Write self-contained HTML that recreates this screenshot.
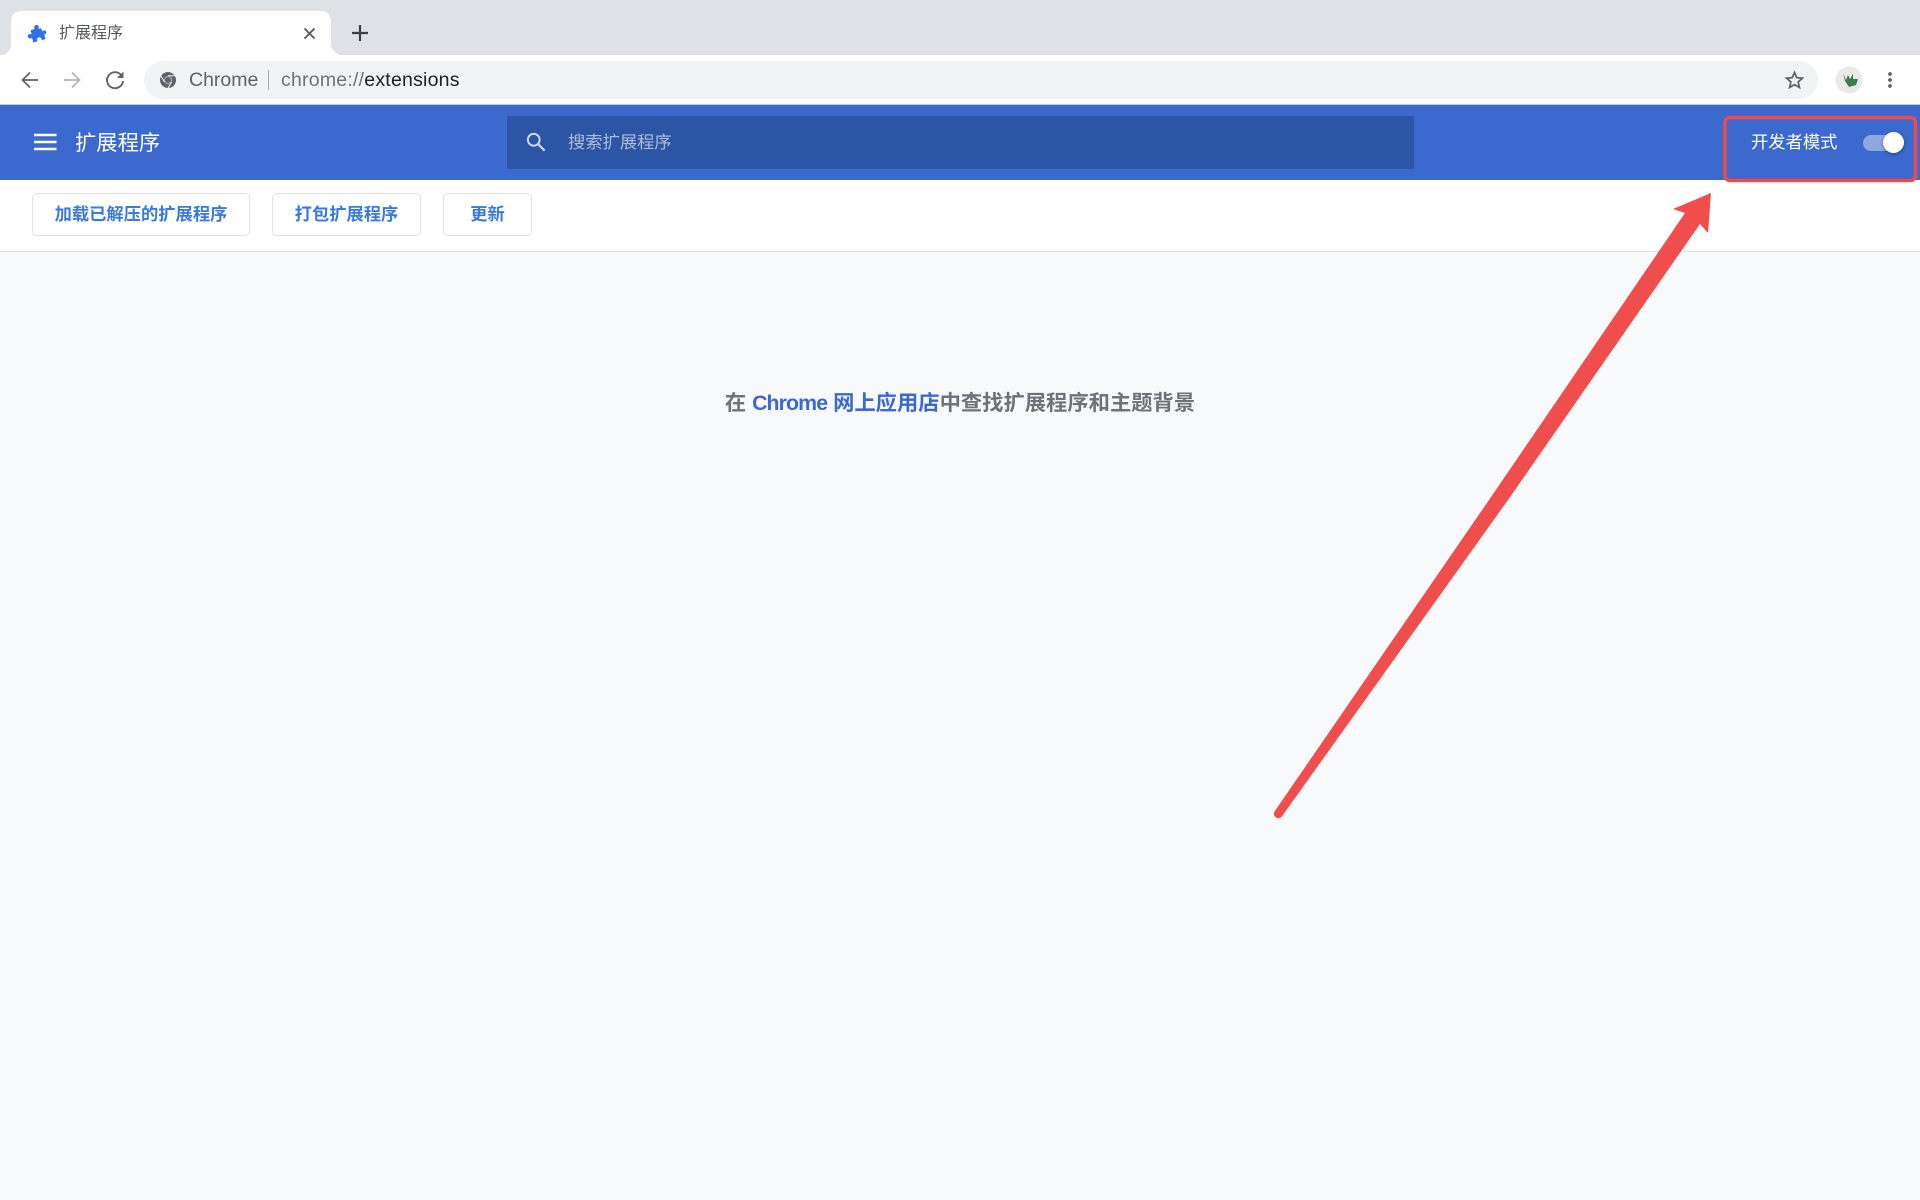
<!DOCTYPE html>
<html lang="zh">
<head>
<meta charset="utf-8">
<title>扩展程序</title>
<style>
html,body{margin:0;padding:0}
body{width:1920px;height:1200px;position:relative;overflow:hidden;background:#f8f9fb;font-family:"Liberation Sans","Noto Sans CJK SC",sans-serif}
.a{position:absolute;white-space:nowrap}
svg{position:absolute;display:block}
.btn{position:absolute;top:193px;height:41px;border:1.5px solid #dfe1e5;border-radius:5px;background:#fff;color:#3a7ae0;font-size:17.300px;font-weight:700;line-height:41px;text-align:center;white-space:nowrap}
</style>
</head>
<body>
<div class="a" style="left:0;top:0;width:1920px;height:55px;background:#dee1e6"></div>
<div class="a" style="left:0;top:55px;width:1920px;height:49px;background:#fff"></div>
<div class="a" style="left:0;top:104px;width:1920px;height:1px;background:#c8cacd"></div>

<!-- tab -->
<svg style="left:0;top:0" width="345" height="56" viewBox="0 0 345 56"><path d="M0 56H345C337 56 331 50 331 44V22C331 15 327 11 320 11H22C15 11 11 15 11 22V44C11 50 7 55 0 56Z" fill="#fff"/></svg>
<svg style="left:27px;top:24px" width="20" height="20" viewBox="0 0 20 20"><path d="M9.500 1C7.800 1 6.800 2.500 7.300 4L7.600 5L3.500 6.200L4.700 10.300L3.800 10.100C2.200 9.700 .8 10.800 .8 12.300C.8 13.900 2.400 14.900 3.900 14.400L5.100 14.100L6.300 18.500L10.500 17.300L10.200 16C9.800 14.700 10.700 13.500 12 13.400C13.400 13.300 14.600 14.300 14.600 15.600L14.600 16.300L18.500 15.100L17.200 10.500L18 10.300C19.400 9.900 19.800 8 18.800 7C17.800 6 16 6.200 15.500 7.400L14 4.100L11.400 4.900L11.700 3.800C12.100 2.300 11.100 1 9.500 1Z" fill="#2f72e4"/></svg>
<div class="a" style="left:59px;top:23px;font-size:16px;line-height:22px;color:#55585c">扩展程序</div>
<svg style="left:303px;top:27px" width="13" height="13" viewBox="0 0 13 13"><path d="M1.500 1.500L11.500 11.500M11.500 1.500L1.500 11.500" stroke="#55585c" stroke-width="1.900" fill="none"/></svg>
<svg style="left:352px;top:25px" width="16" height="16" viewBox="0 0 16 16"><path d="M8 0V16M0 8H16" stroke="#3c4043" stroke-width="2.200" fill="none"/></svg>

<!-- toolbar -->
<svg style="left:20px;top:70px" width="20" height="20" viewBox="0 0 20 20"><path d="M18 10H3M10 2.500L2.500 10L10 17.500" stroke="#5f6368" stroke-width="1.700" fill="none"/></svg>
<svg style="left:62px;top:70px" width="20" height="20" viewBox="0 0 20 20"><path d="M2 10H17M10 2.500L17.500 10L10 17.500" stroke="#b4b6b9" stroke-width="1.700" fill="none"/></svg>
<svg style="left:105px;top:70px" width="20" height="20" viewBox="0 0 20 20"><path d="M16.500 5.500A8 8 0 1 0 18 11" stroke="#5f6368" stroke-width="1.900" fill="none"/><path d="M18.500 1.500V8H12Z" fill="#5f6368"/></svg>
<div class="a" style="left:144px;top:61px;width:1674px;height:38px;border-radius:19px;background:#f1f3f4"></div>
<svg style="left:160px;top:72px" width="16" height="16" viewBox="0 0 16 16"><circle cx="8" cy="8" r="8" fill="#5f6368"/><circle cx="8" cy="8" r="4.200" fill="#9a9da1"/><circle cx="8" cy="8" r="2.800" fill="#5f6368"/><path d="M8 3.800H15M4.400 10L1 4M11.600 10L8 16" stroke="#f1f3f4" stroke-width="1"/></svg>
<div class="a" style="left:189px;top:68px;font-size:19.500px;line-height:24px;color:#5f6368">Chrome</div>
<div class="a" style="left:268px;top:70px;width:1px;height:20px;background:#a5a7aa"></div>
<div class="a" style="left:281px;top:68px;font-size:19.500px;line-height:24px;letter-spacing:.22px;color:#6f7276">chrome://<span style="color:#202124">extensions</span></div>
<svg style="left:1784px;top:70px" width="21" height="20" viewBox="0 0 24 24"><path d="M12 3l2.700 6.200 6.800.6-5.100 4.500 1.500 6.700L12 17.500 6.100 21l1.500-6.700L2.500 9.800l6.800-.6z" fill="none" stroke="#5f6368" stroke-width="2.100"/></svg>
<svg style="left:1835px;top:66px" width="28" height="28" viewBox="0 0 28 28"><circle cx="14" cy="14" r="13.500" fill="#e8e9e8"/><path d="M8 7L11 14L13 9L15 13L18 8L18 13L23 13L21 19L14 21L10 15Z" fill="#3d7a4c"/></svg>
<svg style="left:1887px;top:71px" width="6" height="18" viewBox="0 0 6 18"><circle cx="3" cy="3" r="1.900" fill="#5f6368"/><circle cx="3" cy="9" r="1.900" fill="#5f6368"/><circle cx="3" cy="15" r="1.900" fill="#5f6368"/></svg>

<!-- blue header -->
<div class="a" style="left:0;top:105px;width:1920px;height:75px;background:#3b69ce"></div>
<svg style="left:34px;top:133px" width="23" height="18" viewBox="0 0 23 18"><path d="M0 2H22.500M0 9H22.500M0 16H22.500" stroke="#fff" stroke-width="2.400" fill="none"/></svg>
<div class="a" style="left:75px;top:129px;font-size:21.300px;line-height:28px;color:#fff">扩展程序</div>
<div class="a" style="left:507px;top:116px;width:907px;height:53px;border-radius:2px;background:#2d55a5"></div>
<svg style="left:526px;top:132px" width="20" height="20" viewBox="0 0 22 22"><circle cx="8.500" cy="8.500" r="6.500" fill="none" stroke="#d3dbec" stroke-width="2.100"/><path d="M13.300 13.300L20.500 20.500" stroke="#d3dbec" stroke-width="2.400"/></svg>
<div class="a" style="left:568px;top:130px;font-size:17.300px;line-height:24px;color:#aebbd8">搜索扩展程序</div>
<div class="a" style="left:1751px;top:130px;font-size:17.300px;line-height:24px;color:#fff">开发者模式</div>
<div class="a" style="left:1863px;top:135px;width:36px;height:16px;border-radius:8px;background:#8fa8e0"></div>
<div class="a" style="left:1883px;top:132px;width:21px;height:21px;border-radius:50%;background:#fff;box-shadow:0 1px 3px rgba(0,0,0,.4)"></div>

<!-- subbar -->
<div class="a" style="left:0;top:180px;width:1920px;height:71px;background:#fff"></div>
<div class="a" style="left:0;top:251px;width:1920px;height:1px;background:#dedfe2"></div>
<div class="btn" style="left:32px;width:216px">加载已解压的扩展程序</div>
<div class="btn" style="left:272px;width:147px">打包扩展程序</div>
<div class="btn" style="left:443px;width:87px">更新</div>

<div class="a" style="left:0;top:390px;width:1920px;text-align:center;font-size:21.300px;line-height:27px;font-weight:700;color:#6f7276">在 <span style="color:#3b69ce"><span style="letter-spacing:-.9px">Chrome</span> 网上应用店</span>中查找扩展程序和主题背景</div>

<!-- annotation -->
<svg style="left:0;top:0" width="1920" height="1200" viewBox="0 0 1920 1200">
<rect x="1725" y="117.500" width="190.500" height="63" rx="5" fill="none" stroke="#ec4a4c" stroke-width="3.500"/>
<path d="M1711 193L1673 209L1685 213L1489 500L1274.500 811.500A4.500 4.500 0 0 0 1281.500 817L1508 500L1700 224L1708 233Z" fill="#ef4e4c"/>
</svg>
</body>
</html>
